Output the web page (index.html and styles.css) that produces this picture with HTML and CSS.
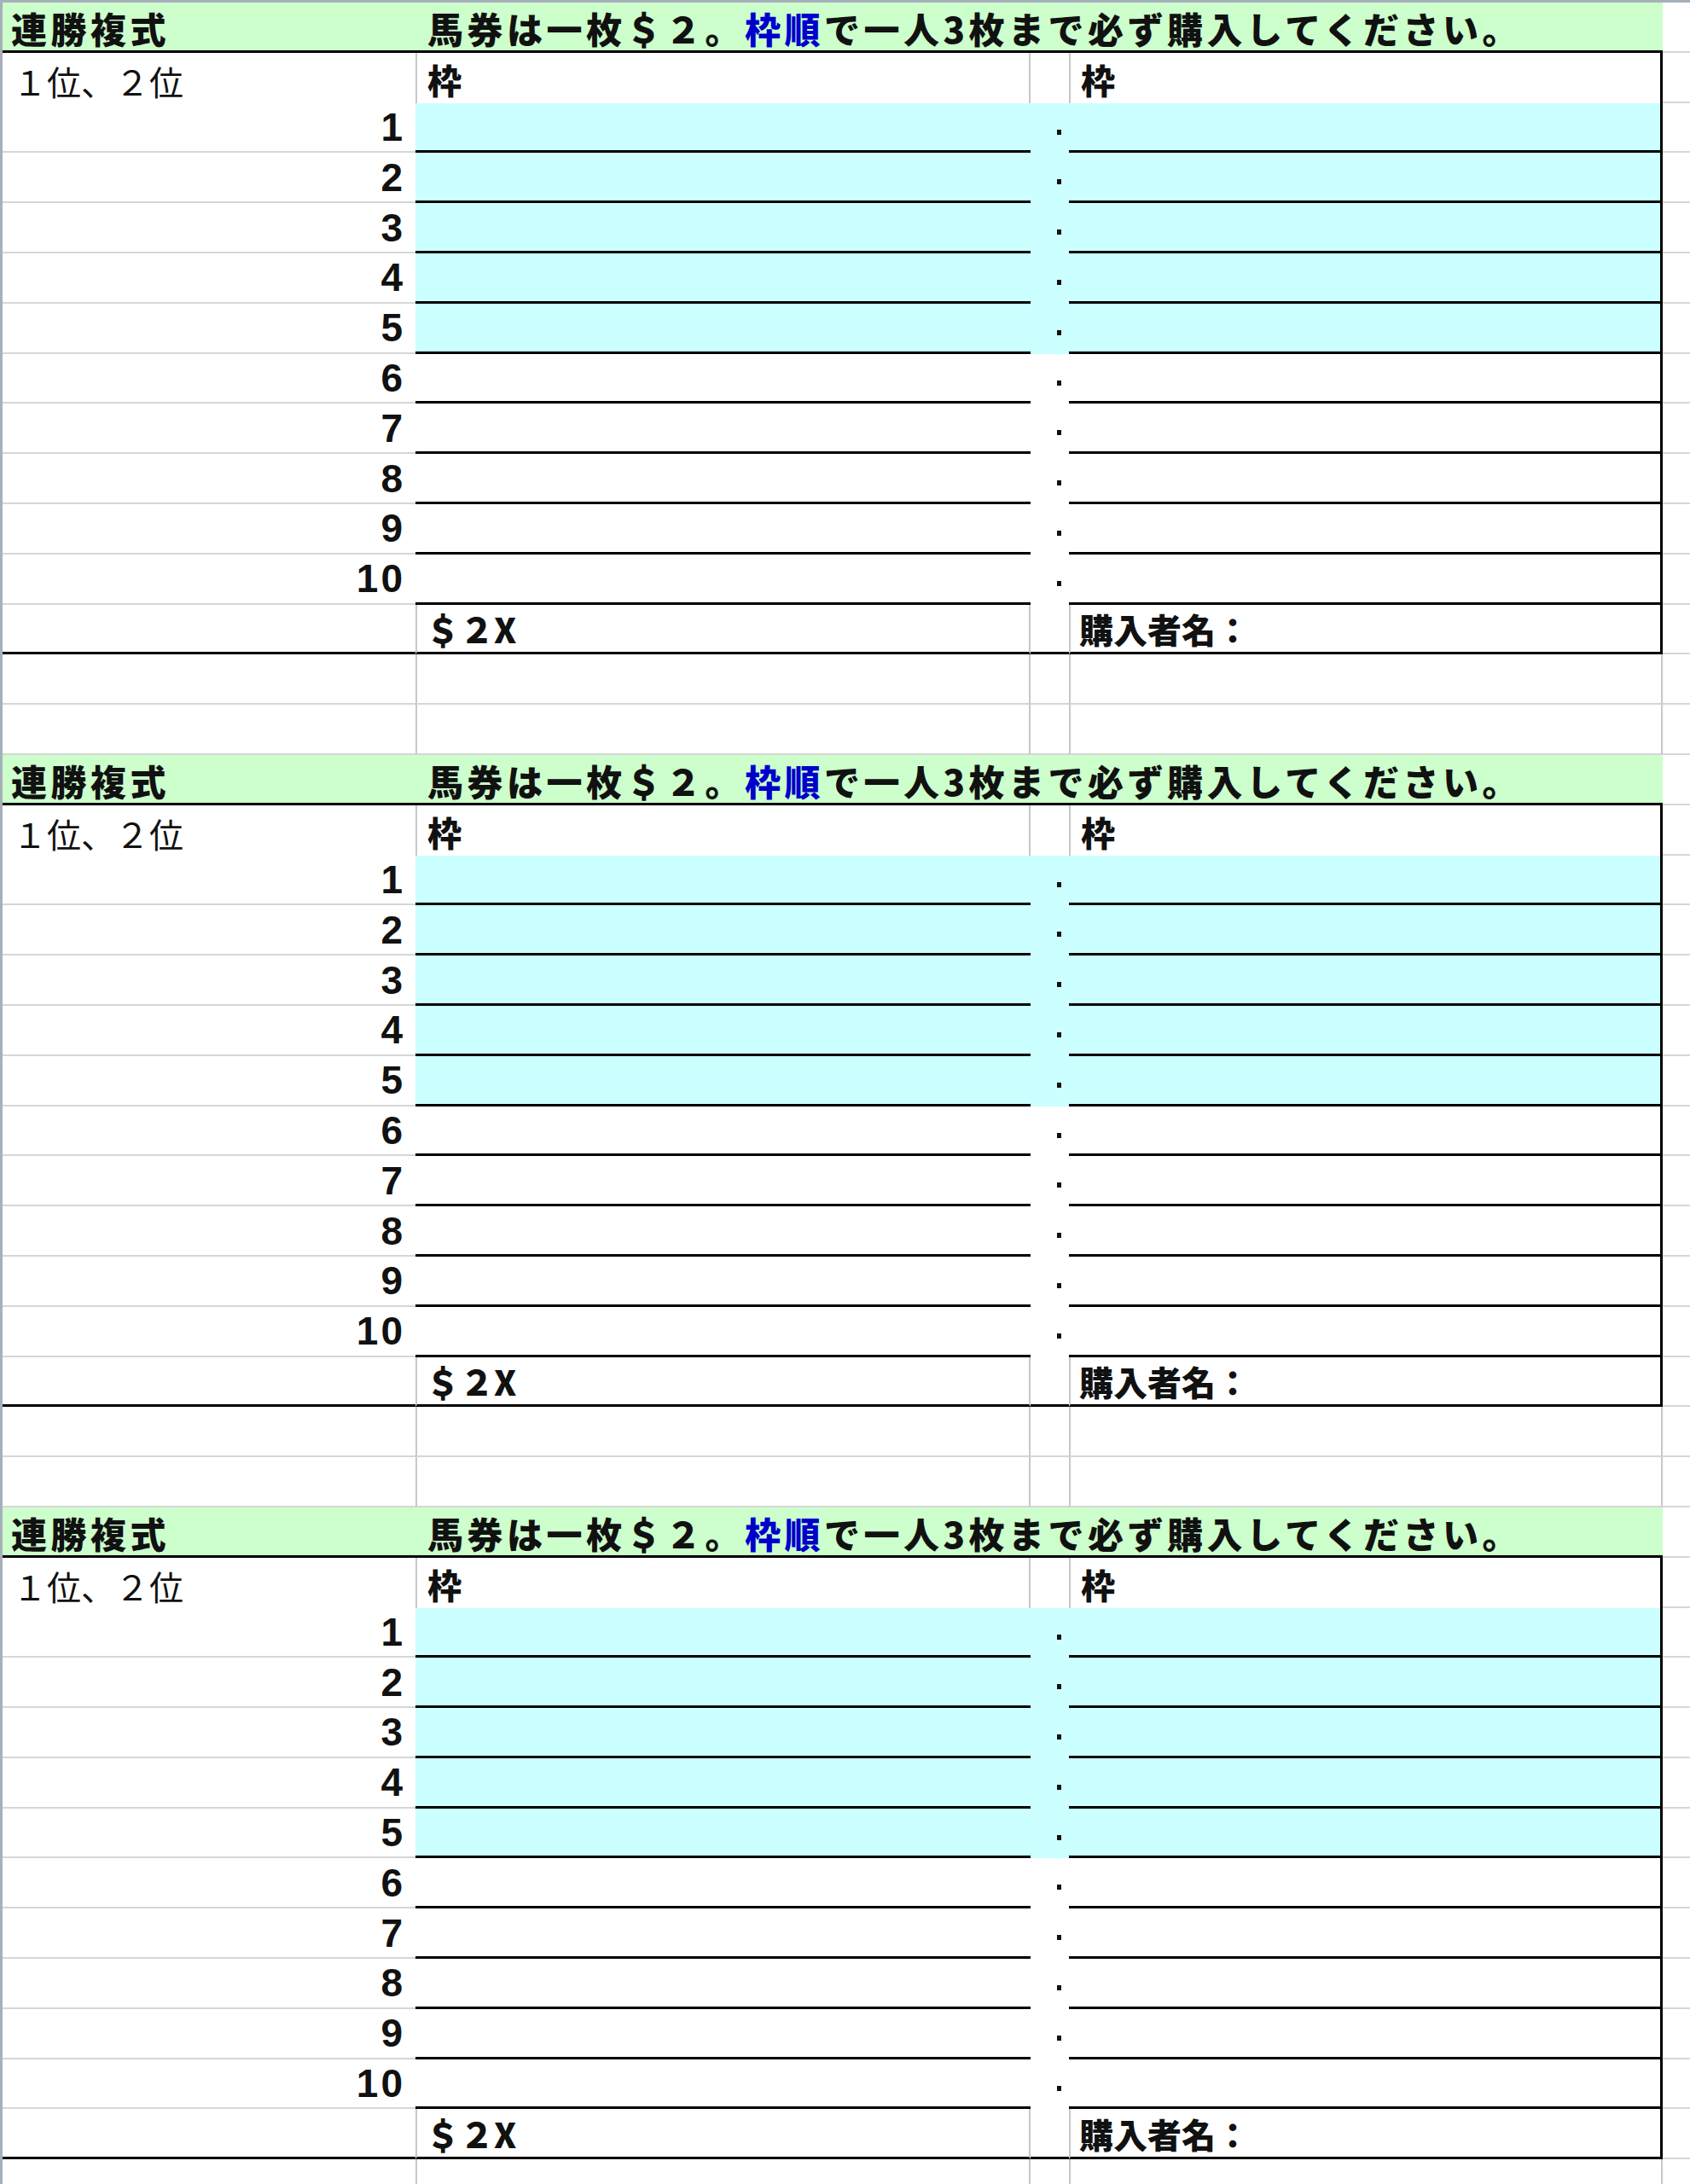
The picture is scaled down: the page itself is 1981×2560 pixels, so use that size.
FILE: index.html
```html
<!DOCTYPE html>
<html lang="ja">
<head>
    <meta charset="UTF-8">
    <meta name="viewport" content="width=device-width, initial-scale=1.0">
    <title>連勝複式</title>
    <link rel="stylesheet" href="styles.css">
</head>
<body>
<div class="sheet">

    <!-- ticket 1 -->
    <section class="ticket">
        <div class="row head">
            <div class="c-label">連勝複式</div>
            <div class="c-note">馬券は一枚＄２。<span class="blue">枠順</span>で一人3枚まで必ず購入してください。</div>
            <div class="c-edge"></div>
        </div>
        <div class="row cols">
            <div class="c-left">１位、２位</div>
            <div class="c-mid">枠</div>
            <div class="c-gap"></div>
            <div class="c-right">枠</div>
            <div class="c-edge"></div>
        </div>
        <div class="row pick fill"><div class="c-left">1</div><div class="c-mid"></div><div class="c-gap"></div><div class="c-right"></div><div class="c-edge"></div></div>
        <div class="row pick fill"><div class="c-left">2</div><div class="c-mid"></div><div class="c-gap"></div><div class="c-right"></div><div class="c-edge"></div></div>
        <div class="row pick fill"><div class="c-left">3</div><div class="c-mid"></div><div class="c-gap"></div><div class="c-right"></div><div class="c-edge"></div></div>
        <div class="row pick fill"><div class="c-left">4</div><div class="c-mid"></div><div class="c-gap"></div><div class="c-right"></div><div class="c-edge"></div></div>
        <div class="row pick fill"><div class="c-left">5</div><div class="c-mid"></div><div class="c-gap"></div><div class="c-right"></div><div class="c-edge"></div></div>
        <div class="row pick"><div class="c-left">6</div><div class="c-mid"></div><div class="c-gap"></div><div class="c-right"></div><div class="c-edge"></div></div>
        <div class="row pick"><div class="c-left">7</div><div class="c-mid"></div><div class="c-gap"></div><div class="c-right"></div><div class="c-edge"></div></div>
        <div class="row pick"><div class="c-left">8</div><div class="c-mid"></div><div class="c-gap"></div><div class="c-right"></div><div class="c-edge"></div></div>
        <div class="row pick"><div class="c-left">9</div><div class="c-mid"></div><div class="c-gap"></div><div class="c-right"></div><div class="c-edge"></div></div>
        <div class="row pick"><div class="c-left">10</div><div class="c-mid"></div><div class="c-gap"></div><div class="c-right"></div><div class="c-edge"></div></div>
        <div class="row total">
            <div class="c-left"></div>
            <div class="c-mid">＄２X</div>
            <div class="c-gap"></div>
            <div class="c-right">購入者名：</div>
            <div class="c-edge"></div>
        </div>
        <div class="row blank"><div class="c-left"></div><div class="c-mid"></div><div class="c-gap"></div><div class="c-right"></div><div class="c-edge"></div></div>
        <div class="row blank"><div class="c-left"></div><div class="c-mid"></div><div class="c-gap"></div><div class="c-right"></div><div class="c-edge"></div></div>
    </section>

    <!-- ticket 2 -->
    <section class="ticket">
        <div class="row head">
            <div class="c-label">連勝複式</div>
            <div class="c-note">馬券は一枚＄２。<span class="blue">枠順</span>で一人3枚まで必ず購入してください。</div>
            <div class="c-edge"></div>
        </div>
        <div class="row cols">
            <div class="c-left">１位、２位</div>
            <div class="c-mid">枠</div>
            <div class="c-gap"></div>
            <div class="c-right">枠</div>
            <div class="c-edge"></div>
        </div>
        <div class="row pick fill"><div class="c-left">1</div><div class="c-mid"></div><div class="c-gap"></div><div class="c-right"></div><div class="c-edge"></div></div>
        <div class="row pick fill"><div class="c-left">2</div><div class="c-mid"></div><div class="c-gap"></div><div class="c-right"></div><div class="c-edge"></div></div>
        <div class="row pick fill"><div class="c-left">3</div><div class="c-mid"></div><div class="c-gap"></div><div class="c-right"></div><div class="c-edge"></div></div>
        <div class="row pick fill"><div class="c-left">4</div><div class="c-mid"></div><div class="c-gap"></div><div class="c-right"></div><div class="c-edge"></div></div>
        <div class="row pick fill"><div class="c-left">5</div><div class="c-mid"></div><div class="c-gap"></div><div class="c-right"></div><div class="c-edge"></div></div>
        <div class="row pick"><div class="c-left">6</div><div class="c-mid"></div><div class="c-gap"></div><div class="c-right"></div><div class="c-edge"></div></div>
        <div class="row pick"><div class="c-left">7</div><div class="c-mid"></div><div class="c-gap"></div><div class="c-right"></div><div class="c-edge"></div></div>
        <div class="row pick"><div class="c-left">8</div><div class="c-mid"></div><div class="c-gap"></div><div class="c-right"></div><div class="c-edge"></div></div>
        <div class="row pick"><div class="c-left">9</div><div class="c-mid"></div><div class="c-gap"></div><div class="c-right"></div><div class="c-edge"></div></div>
        <div class="row pick"><div class="c-left">10</div><div class="c-mid"></div><div class="c-gap"></div><div class="c-right"></div><div class="c-edge"></div></div>
        <div class="row total">
            <div class="c-left"></div>
            <div class="c-mid">＄２X</div>
            <div class="c-gap"></div>
            <div class="c-right">購入者名：</div>
            <div class="c-edge"></div>
        </div>
        <div class="row blank"><div class="c-left"></div><div class="c-mid"></div><div class="c-gap"></div><div class="c-right"></div><div class="c-edge"></div></div>
        <div class="row blank"><div class="c-left"></div><div class="c-mid"></div><div class="c-gap"></div><div class="c-right"></div><div class="c-edge"></div></div>
    </section>

    <!-- ticket 3 -->
    <section class="ticket">
        <div class="row head">
            <div class="c-label">連勝複式</div>
            <div class="c-note">馬券は一枚＄２。<span class="blue">枠順</span>で一人3枚まで必ず購入してください。</div>
            <div class="c-edge"></div>
        </div>
        <div class="row cols">
            <div class="c-left">１位、２位</div>
            <div class="c-mid">枠</div>
            <div class="c-gap"></div>
            <div class="c-right">枠</div>
            <div class="c-edge"></div>
        </div>
        <div class="row pick fill"><div class="c-left">1</div><div class="c-mid"></div><div class="c-gap"></div><div class="c-right"></div><div class="c-edge"></div></div>
        <div class="row pick fill"><div class="c-left">2</div><div class="c-mid"></div><div class="c-gap"></div><div class="c-right"></div><div class="c-edge"></div></div>
        <div class="row pick fill"><div class="c-left">3</div><div class="c-mid"></div><div class="c-gap"></div><div class="c-right"></div><div class="c-edge"></div></div>
        <div class="row pick fill"><div class="c-left">4</div><div class="c-mid"></div><div class="c-gap"></div><div class="c-right"></div><div class="c-edge"></div></div>
        <div class="row pick fill"><div class="c-left">5</div><div class="c-mid"></div><div class="c-gap"></div><div class="c-right"></div><div class="c-edge"></div></div>
        <div class="row pick"><div class="c-left">6</div><div class="c-mid"></div><div class="c-gap"></div><div class="c-right"></div><div class="c-edge"></div></div>
        <div class="row pick"><div class="c-left">7</div><div class="c-mid"></div><div class="c-gap"></div><div class="c-right"></div><div class="c-edge"></div></div>
        <div class="row pick"><div class="c-left">8</div><div class="c-mid"></div><div class="c-gap"></div><div class="c-right"></div><div class="c-edge"></div></div>
        <div class="row pick"><div class="c-left">9</div><div class="c-mid"></div><div class="c-gap"></div><div class="c-right"></div><div class="c-edge"></div></div>
        <div class="row pick"><div class="c-left">10</div><div class="c-mid"></div><div class="c-gap"></div><div class="c-right"></div><div class="c-edge"></div></div>
        <div class="row total">
            <div class="c-left"></div>
            <div class="c-mid">＄２X</div>
            <div class="c-gap"></div>
            <div class="c-right">購入者名：</div>
            <div class="c-edge"></div>
        </div>
        <div class="row blank"><div class="c-left"></div><div class="c-mid"></div><div class="c-gap"></div><div class="c-right"></div><div class="c-edge"></div></div>
    </section>

</div>
</body>
</html>
```

FILE: styles.css
```css
html, body {
    margin: 0;
    padding: 0;
    background: #ffffff;
}

body {
    font-family: "Noto Sans CJK JP", "Noto Sans", sans-serif;
    color: #111111;
    height: 2560px;
    overflow: hidden;
}

.sheet {
    border-top: 3px solid #a7b0ba;
    border-left: 3px solid #a7b0ba;
}

.row {
    display: flex;
    height: 58.8px;
}

.row > div {
    box-sizing: border-box;
    height: 100%;
    display: flex;
    align-items: center;
    white-space: nowrap;
}

.c-left, .c-label { width: 484px; }
.c-mid { width: 721px; }
.c-gap { width: 45px; }
.c-right { width: 696px; }
.c-note { width: 1462px; }
.c-edge {
    flex: 1;
    border-bottom: 2px solid #d6d6d6;
}

/* green title row */
.head .c-label,
.head .c-note {
    background-color: #ccffcc;
    border-bottom: 3px solid #000000;
    font-size: 42px;
    font-weight: 900;
    letter-spacing: 4.5px;
    padding-top: 4px;
}

.head .c-label { padding-left: 10px; }
.head .c-note { padding-left: 14px; }

.blue {
    color: #0000cc;
}

/* column captions */
.cols .c-left {
    font-size: 40px;
    padding-left: 12px;
    padding-top: 8px;
}

.cols .c-mid,
.cols .c-right {
    font-size: 40px;
    font-weight: 900;
    padding-left: 12px;
    padding-top: 4px;
}

.cols .c-mid {
    border-left: 2px solid #c8c8c8;
    border-right: 2px solid #c8c8c8;
}

.cols .c-right {
    border-left: 2px solid #c8c8c8;
    border-right: 3px solid #000000;
}

/* numbered rows */
.pick .c-left {
    justify-content: flex-end;
    padding-right: 12px;
    font-family: "Liberation Sans", Arial, sans-serif;
    font-size: 46px;
    font-weight: bold;
    letter-spacing: 3px;
    border-bottom: 2px solid #d6d6d6;
}

.pick .c-mid {
    border-bottom: 3px solid #000000;
}

.pick .c-right {
    border-bottom: 3px solid #000000;
    border-right: 3px solid #000000;
}

.pick .c-gap {
    position: relative;
}

.pick .c-gap::after {
    content: "";
    position: absolute;
    left: 31px;
    top: 31px;
    width: 5px;
    height: 6px;
    background: #111111;
}

.fill .c-mid,
.fill .c-gap,
.fill .c-right {
    background-color: #ccffff;
}

/* price row */
.total .c-left,
.total .c-gap {
    border-bottom: 3px solid #000000;
}

.total .c-mid,
.total .c-right {
    font-size: 40px;
    font-weight: 900;
    padding-left: 10px;
    padding-top: 2px;
    border-bottom: 3px solid #000000;
}

.total .c-mid {
    border-left: 2px solid #c8c8c8;
    border-right: 2px solid #c8c8c8;
}

.total .c-right {
    border-left: 2px solid #c8c8c8;
    border-right: 3px solid #000000;
}

/* empty spreadsheet rows */
.blank .c-left,
.blank .c-gap {
    border-bottom: 2px solid #d6d6d6;
}

.blank .c-mid,
.blank .c-right {
    border-bottom: 2px solid #d6d6d6;
    border-left: 2px solid #c8c8c8;
    border-right: 2px solid #c8c8c8;
}
```
